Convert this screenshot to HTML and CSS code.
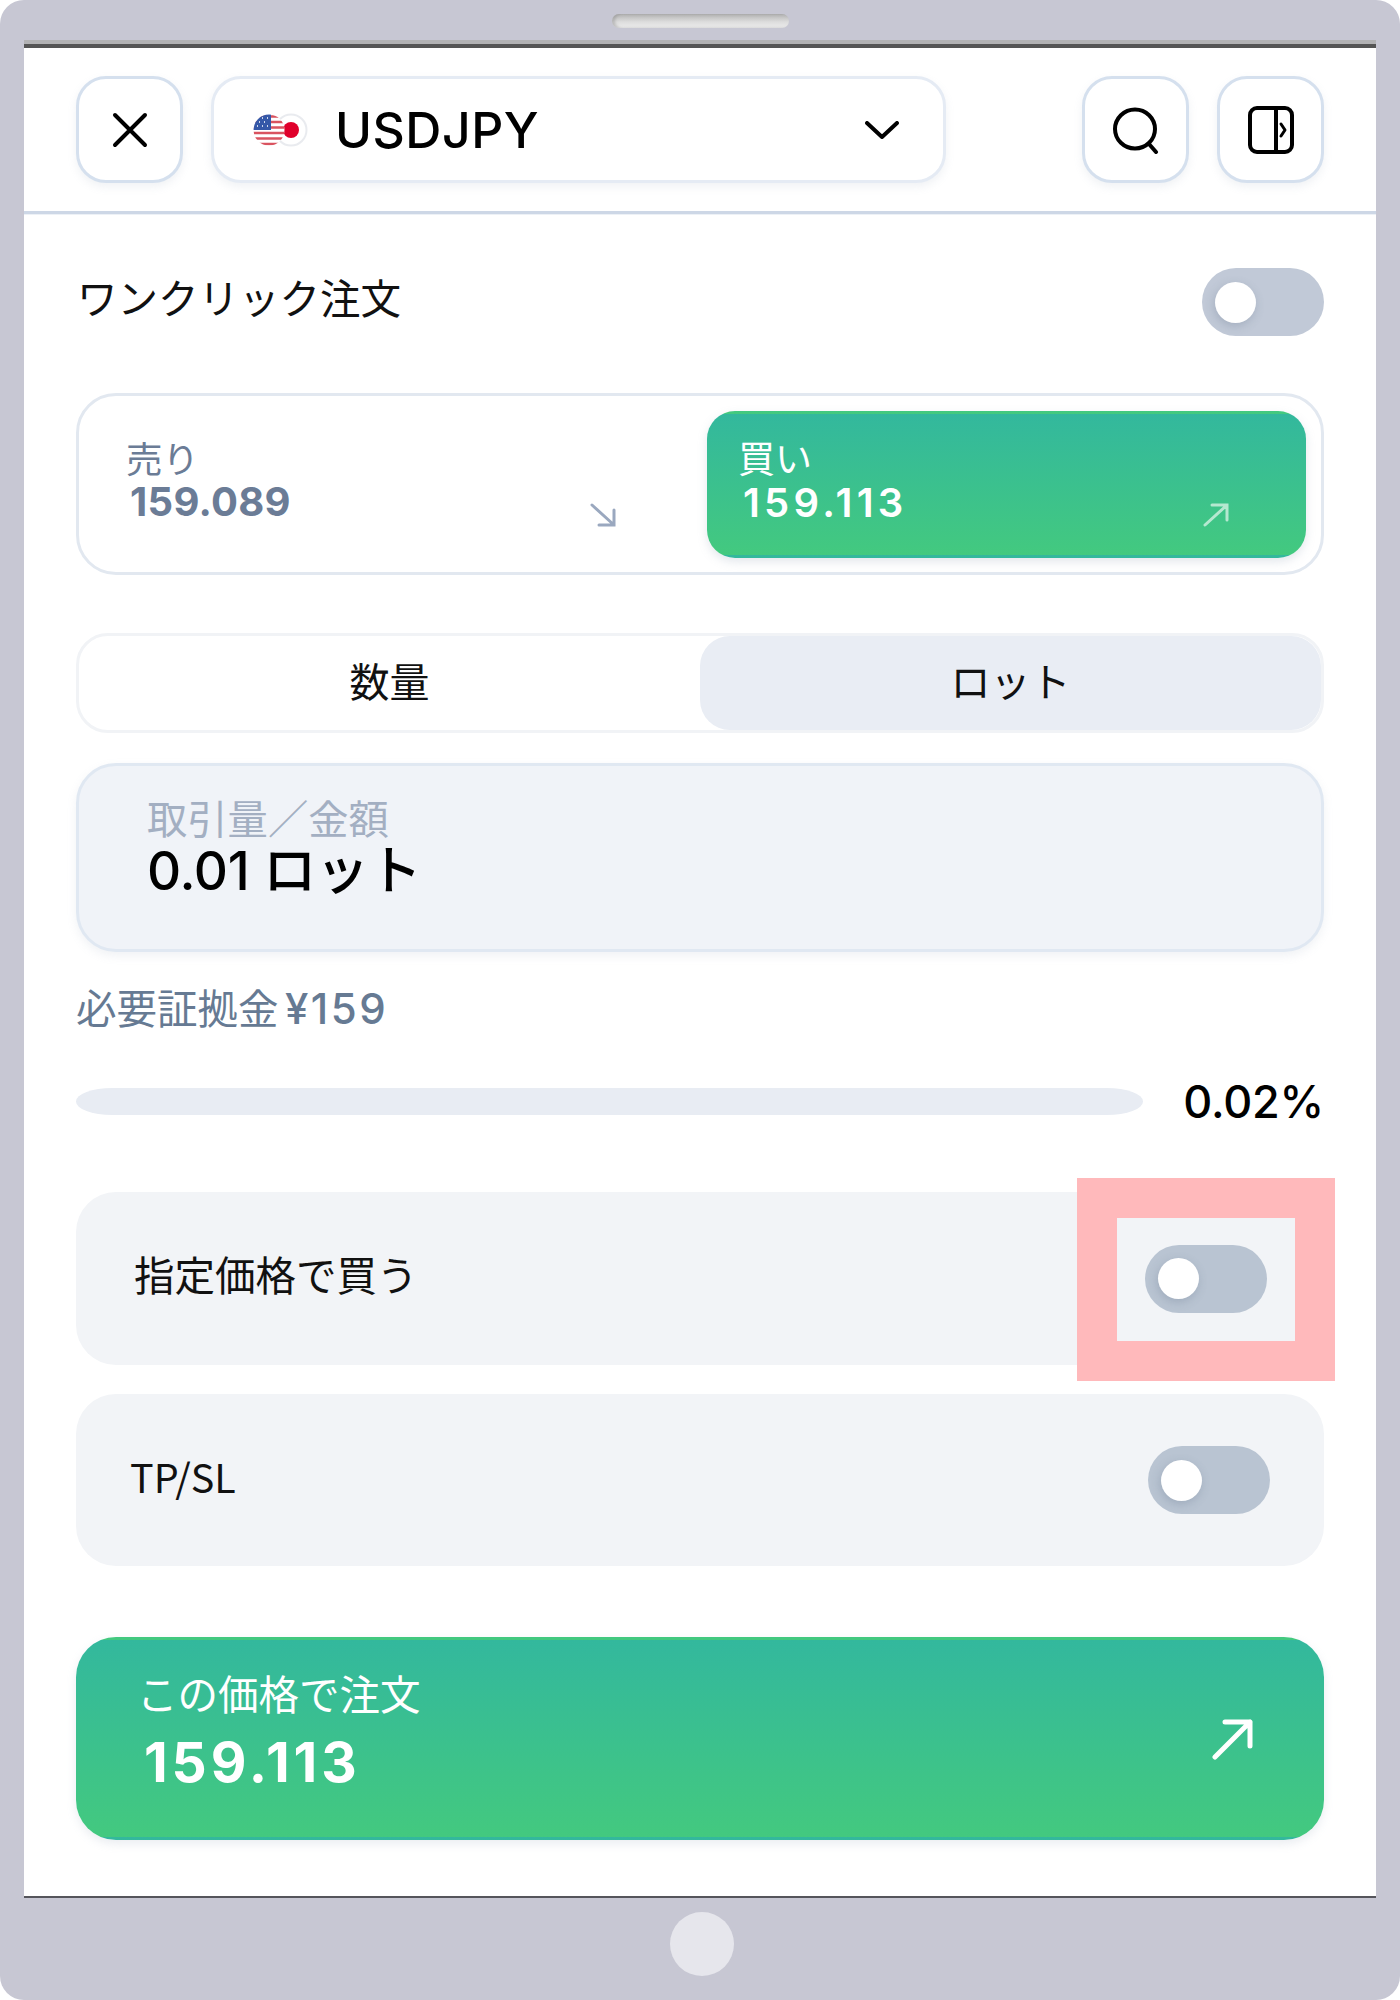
FILE: index.html
```html
<!DOCTYPE html>
<html lang="ja">
<head>
<meta charset="utf-8">
<title>USDJPY</title>
<link rel="stylesheet" href="styles.css">
</head>
<body>
<div class="device">
  <div class="bezel-top"><div class="speaker"></div></div>
  <div class="screen">
    <header class="header">
      <button class="icon-btn">
        <svg width="36" height="36" viewBox="0 0 36 36" fill="none" stroke="#000" stroke-width="4" stroke-linecap="round"><path d="M3 3 33 33M33 3 3 33"/></svg>
      </button>
      <div class="select">
        <svg class="flags" width="56" height="34" viewBox="0 0 56 34">
          <defs><clipPath id="usclip"><circle cx="17" cy="17" r="15.5"/></clipPath></defs>
          <circle cx="39" cy="17" r="15.5" fill="#fff" stroke="#e9ebef" stroke-width="2"/>
          <circle cx="39" cy="17" r="8" fill="#e0002b"/>
          <g clip-path="url(#usclip)">
            <rect x="1" y="1" width="32" height="32" fill="#fff"/>
            <path d="M1 3.5h32M1 9h32M1 14.5h32M1 20h32M1 25.5h32M1 31h32" stroke="#d9535f" stroke-width="2.6"/>
            <rect x="1" y="1" width="18" height="16" fill="#3558a8"/>
            <path d="M5 5h1M10 5h1M15 5h1M7 9h1M12 9h1M5 13h1M10 13h1M15 13h1" stroke="#fff" stroke-width="1.4"/>
          </g>
        </svg>
        <span class="symbol">USDJPY</span>
        <svg class="chevron" width="34" height="18" viewBox="0 0 34 18" fill="none" stroke="#000" stroke-width="4" stroke-linecap="round" stroke-linejoin="round"><path d="M2 2 17 16 32 2"/></svg>
      </div>
      <button class="icon-btn push">
        <svg width="48" height="48" viewBox="0 0 48 48" fill="none" stroke="#000" stroke-width="4" stroke-linecap="round"><ellipse cx="23" cy="23" rx="20" ry="19.5"/><path d="M37 38 44 46"/></svg>
      </button>
      <button class="icon-btn">
        <svg width="46" height="48" viewBox="0 0 46 48" fill="none" stroke="#000" stroke-width="4" stroke-linecap="round" stroke-linejoin="round"><rect x="2" y="2" width="42" height="44" rx="7"/><path d="M28 2V46"/><path d="M33 18 37 24 33 30" stroke-width="3"/></svg>
      </button>
    </header>

    <main class="content">
      <div class="one-click">
        <span class="label">ワンクリック注文</span>
        <div class="toggle toggle-light"><span class="knob"></span></div>
      </div>

      <div class="quote">
        <div class="side side-sell">
          <div class="side-text">
            <div class="side-label">売り</div>
            <div class="side-price">159.089</div>
          </div>
          <svg class="side-arrow" width="26" height="24" viewBox="0 0 26 24" fill="none" stroke="#9aa8bf" stroke-width="3" stroke-linecap="round"><path d="M2 2 24 22M24 7V22H9"/></svg>
        </div>
        <div class="side side-buy">
          <div class="side-text">
            <div class="side-label">買い</div>
            <div class="side-price">159.113</div>
          </div>
          <svg class="side-arrow" width="26" height="24" viewBox="0 0 26 24" fill="none" stroke="#b5e8d0" stroke-width="3" stroke-linecap="round"><path d="M2 22 24 2M9 2H24V17"/></svg>
        </div>
      </div>

      <div class="tabs">
        <div class="tab">数量</div>
        <div class="tab tab-active">ロット</div>
      </div>

      <div class="amount">
        <div class="amount-label">取引量／金額</div>
        <div class="amount-value">0.01 ロット</div>
      </div>

      <div class="margin">必要証拠金 <span class="margin-value">¥159</span></div>

      <div class="usage">
        <div class="track"></div>
        <div class="percent">0.02%</div>
      </div>

      <div class="option option-limit">
        <span class="label">指定価格で買う</span>
        <div class="toggle"><span class="knob"></span></div>
        <div class="highlight"></div>
      </div>
      <div class="option option-tpsl">
        <span class="label label-cjk">TP/SL</span>
        <div class="toggle"><span class="knob"></span></div>
      </div>

      <button class="submit">
        <span class="submit-text">
          <span class="submit-label">この価格で注文</span>
          <span class="submit-price">159.113</span>
        </span>
        <svg width="42" height="42" viewBox="0 0 42 42" fill="none" stroke="#fff" stroke-width="5" stroke-linecap="round" stroke-linejoin="round"><path d="M4 39 39 4M14 4H39V28"/></svg>
      </button>
    </main>
  </div>
  <div class="bezel-bottom"><div class="home"></div></div>
</div>
</body>
</html>
```

FILE: styles.css
```css
* { box-sizing: border-box; }
html, body { margin: 0; padding: 0; background: #fff; }
body { font-family: Inter, "Noto Sans CJK JP", sans-serif; color: #000; }
button { font: inherit; color: inherit; padding: 0; background: none; cursor: pointer; }

.device {
  width: 1400px; height: 2000px; background: #c7c7d3;
  border-radius: 24px; padding: 0 24px;
  display: flex; flex-direction: column;
}
.bezel-top { height: 40px; display: flex; justify-content: center; padding-top: 14px; }
.speaker {
  width: 177px; height: 14px; border-radius: 7px;
  background: linear-gradient(180deg, #b4b4b4 0%, #dcdcdc 55%, #eeeeee 100%);
  box-shadow: inset 3px 0 3px rgba(120,120,120,.35);
}
.screen {
  height: 1858px; background: #fff;
  border-top: 4px solid #b2b2b4;
  border-bottom: 2px solid #55555b;
  box-shadow: inset 0 4px 0 #555;
  display: flex; flex-direction: column;
}
.bezel-bottom { flex: 1; display: flex; justify-content: center; align-items: center; padding: 0 0 10px 4px; }
.home { width: 64px; height: 64px; border-radius: 50%; background: #e6e6ec; }

.header {
  height: 170px; padding: 32px 52px 0; display: flex; gap: 28px;
  align-items: flex-start;
  border-bottom: 3px solid #cdd7e6;
  box-shadow: 0 1px 0 #edf1f6;
  flex: none;
}
.icon-btn {
  width: 107px; height: 107px; border: 3px solid #d5e0ee; border-radius: 30px;
  background: #fff; display: flex; align-items: center; justify-content: center;
  box-shadow: 0 4px 8px rgba(148,163,184,.14);
}
.push { margin-left: auto; }
.select {
  width: 735px; height: 107px; border: 3px solid #e5ebf4; border-radius: 30px;
  background: #fff; display: flex; align-items: center;
  padding: 0 44px 0 38px;
  box-shadow: 0 4px 8px rgba(148,163,184,.14);
}
.symbol { font-size: 50px; font-weight: 500; margin-left: 27px; line-height: 1; letter-spacing: .5px; }
.chevron { margin-left: auto; }

.content { padding: 0 52px; flex: 1; display: flex; flex-direction: column; }
.label { font-size: 40.5px; line-height: 48px; color: #111; }
.label-cjk { font-family: "Noto Sans CJK JP", sans-serif; font-size: 39.5px; }

.one-click { margin-top: 54px; display: flex; justify-content: space-between; align-items: center; height: 68px; }
.one-click .label { margin: -5px 0 0 1px; }

.toggle {
  width: 122px; height: 68px; border-radius: 34px; background: #b9c4d2;
  display: flex; align-items: center; padding-left: 13px; flex: none;
  position: relative; z-index: 1;
}
.toggle-light { background: #c1c9d7; }
.knob {
  width: 41px; height: 41px; border-radius: 50%; background: #fff;
  box-shadow: -1px 3px 10px rgba(100,116,139,.3);
}

.quote {
  margin-top: 57px; height: 182px; border: 3px solid #e2e8f0; border-radius: 40px;
  padding: 15px 15px 14px; display: flex; background: #fff;
}
.side { display: flex; justify-content: space-between; }
.side-sell { width: 613px; padding: 29px 91px 0 32px; color: #6b7c96; }
.side-buy {
  flex: 1; border: 3px solid transparent; border-radius: 28px; color: #fff;
  background: linear-gradient(180deg, #33b89d 0%, #43c97f 100%);
  padding: 26px 74px 0 28px;
  box-shadow: 0 4px 10px rgba(148,163,184,.25);
}
.side-label { font-size: 36.5px; line-height: 40px; }
.side-price { font-size: 40px; line-height: 44px; font-weight: 700; margin-left: 4px; letter-spacing: .3px; }
.side-buy .side-label { font-size: 37px; }
.side-buy .side-price { letter-spacing: 4.2px; font-weight: 600; margin: 1px 0 0 5px; }
.side-sell .side-arrow { margin-top: 63px; }
.side-buy .side-arrow { margin-top: 63px; }

.tabs {
  margin-top: 58px; height: 100px; border: 3px solid #f1f3f6; border-radius: 32px;
  display: flex; background: #fff;
}
.tab { flex: 1; display: flex; align-items: center; justify-content: center; font-size: 40px; color: #111; padding-bottom: 6px; }
.tab-active { flex: none; width: 621px; background: #e9edf4; border-radius: 30px; }

.amount {
  margin-top: 30px; height: 189px; border: 3px solid #e0e8f2; border-radius: 40px;
  background: #f0f3f8; padding: 31px 0 0 68px;
  box-shadow: 0 4px 10px rgba(148,163,184,.14);
}
.amount-label { font-size: 40.3px; line-height: 46px; color: #a3afc2; }
.amount-value { font-size: 53px; line-height: 56px; font-weight: 500; letter-spacing: -.3px; }

.margin { margin-top: 33px; font-size: 40.5px; line-height: 48px; color: #667a93; }
.margin-value { font-size: 42px; font-weight: 500; letter-spacing: 2.5px; margin-left: -5px; }

.usage { margin-top: 44px; height: 46px; display: flex; align-items: center; justify-content: space-between; }
.track { width: 1067px; height: 27px; background: #e8ecf3; border-radius: 36px / 13.5px; }
.percent { font-size: 45px; line-height: 46px; font-weight: 500; letter-spacing: -.2px; margin-top: 2px; }

.option {
  display: flex; align-items: center; justify-content: space-between;
  background: #f2f4f7; border-radius: 40px; position: relative;
}
.option-limit { margin-top: 68px; height: 173px; padding: 0 57px 0 58px; }
.option-limit .label { margin-top: -4px; }
.option-tpsl { margin-top: 29px; height: 172px; padding: 0 54px; }
.option-tpsl .label { margin-top: -9px; }
.highlight {
  position: absolute; left: 1001px; top: -14px; width: 258px; height: 203px;
  border: 40px solid #ffb9bb; background: #f2f4f7;
}

.submit {
  margin-top: 71px; height: 203px; border: 3px solid transparent; border-radius: 40px;
  background: linear-gradient(180deg, #33b89d 0%, #43c97f 100%);
  color: #fff; display: flex; align-items: center; justify-content: space-between;
  padding: 0 68px 0 58px; text-align: left;
  box-shadow: 0 4px 10px rgba(148,163,184,.2);
}
.submit-text { display: flex; flex-direction: column; margin-bottom: 12px; }
.submit-label { font-size: 40.5px; line-height: 46px; }
.submit-price { font-size: 55px; line-height: 60px; font-weight: 700; margin: 13px 0 0 7px; letter-spacing: 3.9px; }
```
